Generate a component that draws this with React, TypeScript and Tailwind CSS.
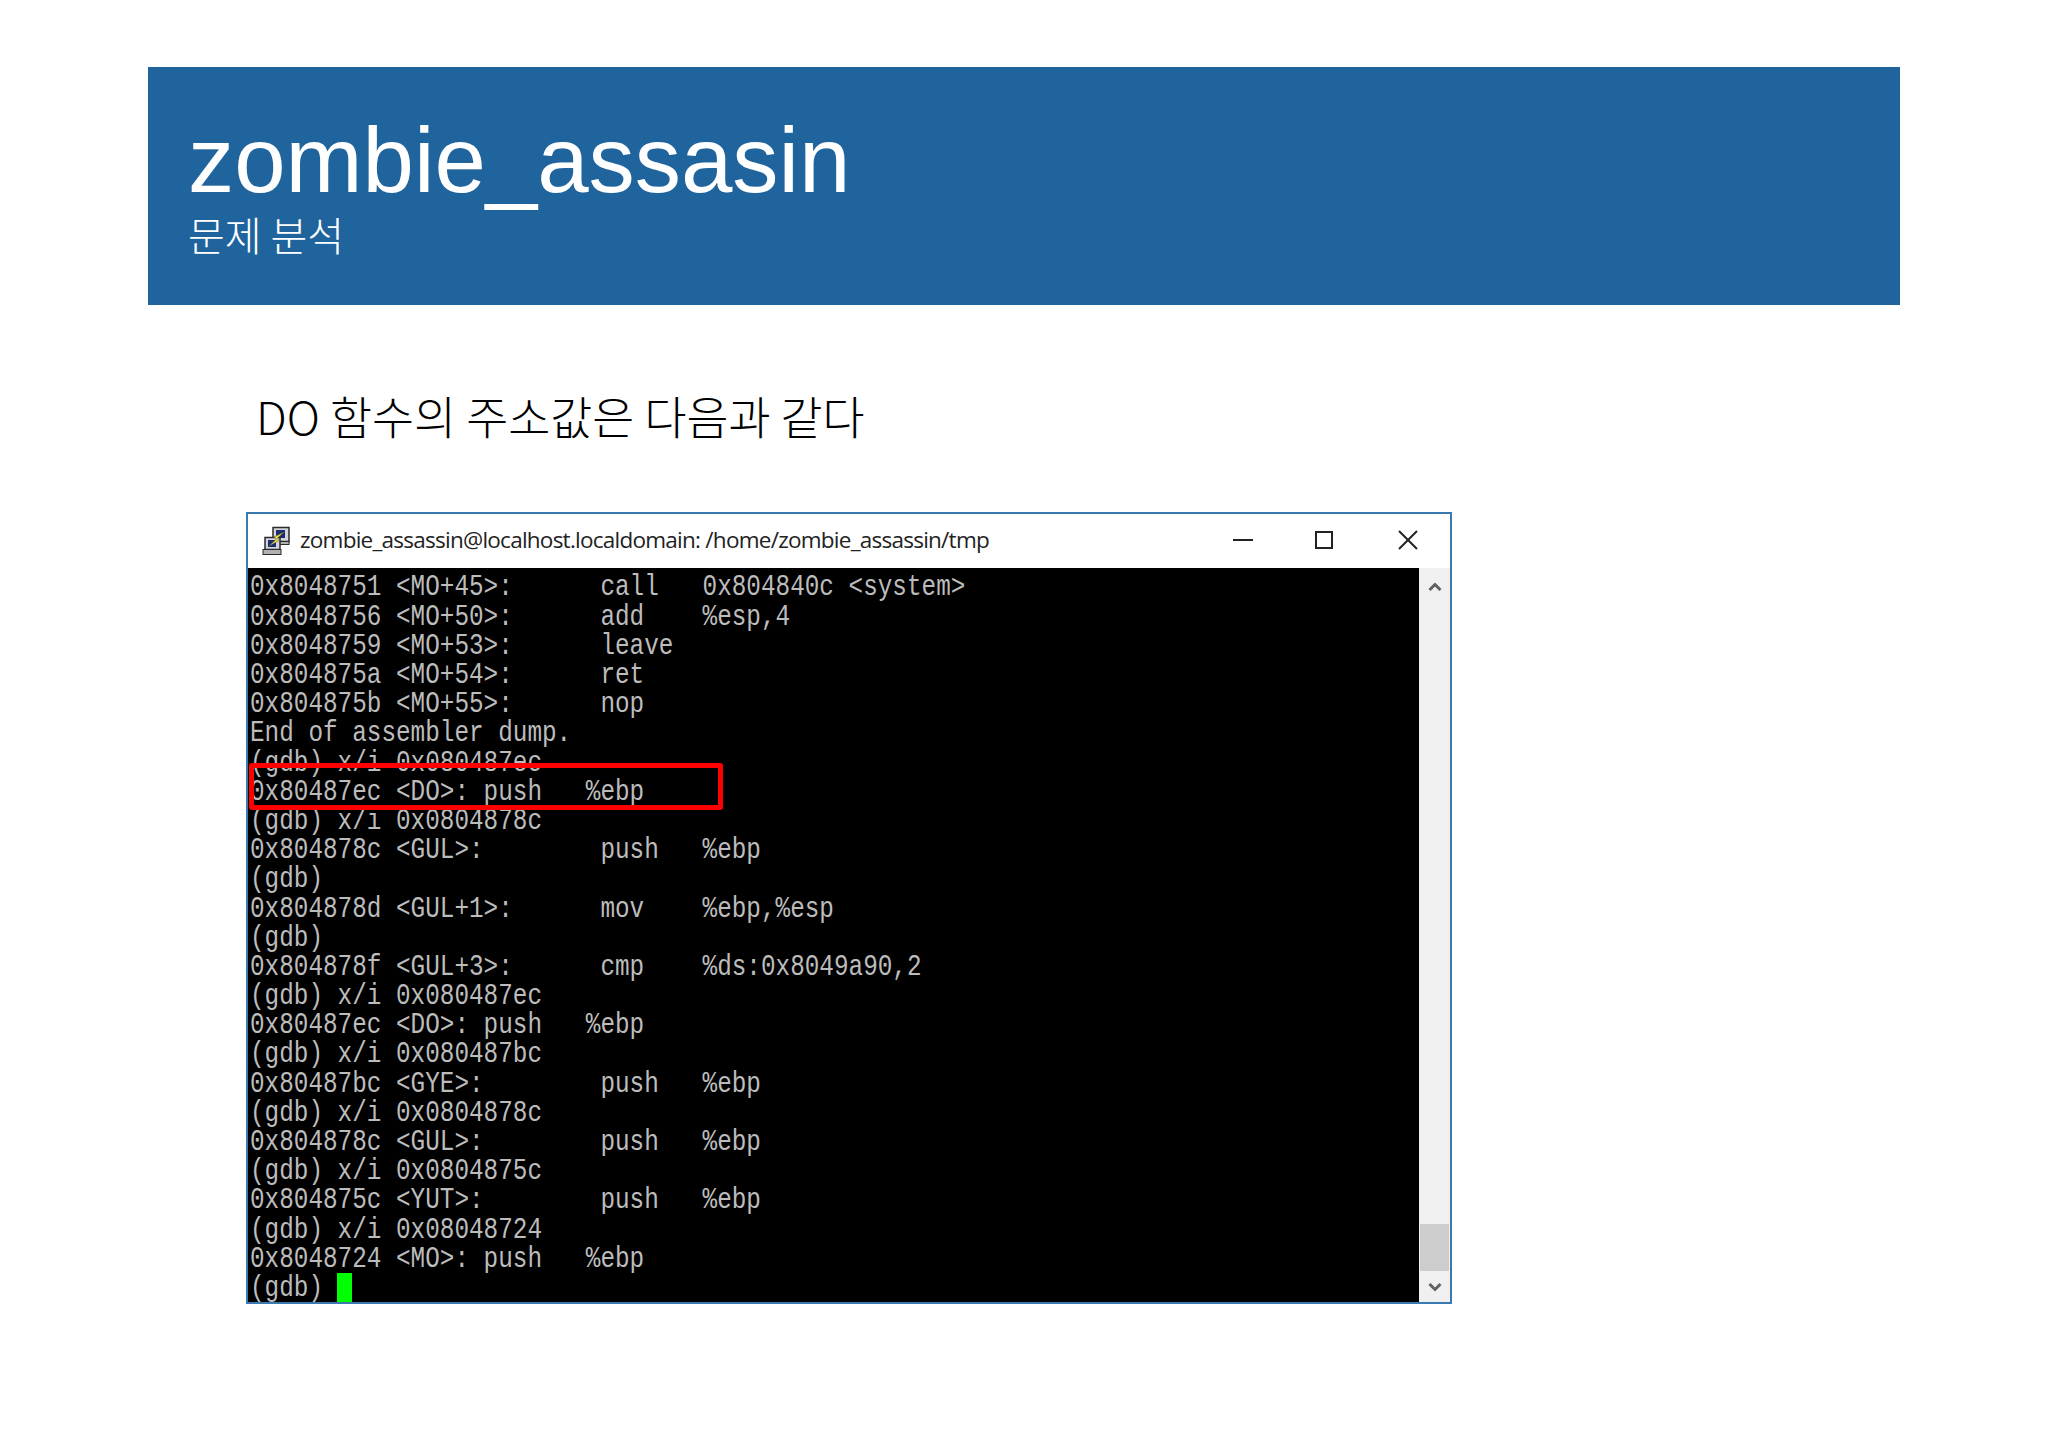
const LINES = [
  "0x8048751 <MO+45>:      call   0x804840c <system>",
  "0x8048756 <MO+50>:      add    %esp,4",
  "0x8048759 <MO+53>:      leave",
  "0x804875a <MO+54>:      ret",
  "0x804875b <MO+55>:      nop",
  "End of assembler dump.",
  "(gdb) x/i 0x080487ec",
  "0x80487ec <DO>: push   %ebp",
  "(gdb) x/i 0x0804878c",
  "0x804878c <GUL>:        push   %ebp",
  "(gdb)",
  "0x804878d <GUL+1>:      mov    %ebp,%esp",
  "(gdb)",
  "0x804878f <GUL+3>:      cmp    %ds:0x8049a90,2",
  "(gdb) x/i 0x080487ec",
  "0x80487ec <DO>: push   %ebp",
  "(gdb) x/i 0x080487bc",
  "0x80487bc <GYE>:        push   %ebp",
  "(gdb) x/i 0x0804878c",
  "0x804878c <GUL>:        push   %ebp",
  "(gdb) x/i 0x0804875c",
  "0x804875c <YUT>:        push   %ebp",
  "(gdb) x/i 0x08048724",
  "0x8048724 <MO>: push   %ebp",
];

function PuttyIcon() {
  return (
    <svg width="30" height="30" viewBox="0 0 30 30" className="shrink-0">
      <rect x="12" y="1.5" width="16" height="14" fill="#d4d4dc" stroke="#2a2a2a" strokeWidth="1.5" />
      <rect x="15" y="4" width="9" height="8" fill="#1c2a70" />
      <rect x="11" y="15.5" width="17" height="3" fill="#b0b0b0" stroke="#2a2a2a" strokeWidth="1" />
      <rect x="4" y="11.5" width="15" height="12" fill="#d4d4dc" stroke="#2a2a2a" strokeWidth="1.5" />
      <rect x="7" y="14" width="8" height="7" fill="#1c2a70" />
      <rect x="2" y="23.5" width="18" height="5" fill="#b0b0b0" stroke="#2a2a2a" strokeWidth="1" />
      <path d="M23 6 L13 11 L15.5 13 L8 20 L18 14.5 L16 12.5 Z" fill="#f2e24a" stroke="#6a6a30" strokeWidth="0.6" />
    </svg>
  );
}

export default function App() {
  return (
    <div className="w-[2048px] h-[1449px] bg-white pt-[67px] overflow-hidden font-['Liberation_Sans','Noto_Sans_CJK_KR',sans-serif]">
      <div className="ml-[148px] w-[1752px] h-[238px] bg-[#20649e] pl-[40px] pt-[47px] text-white">
        <h1 className="text-[92.4px] leading-[92px] font-normal">zombie_assasin</h1>
        <p className="text-[40px] leading-[46px] mt-[5px] font-['Noto_Sans_CJK_KR',sans-serif] font-light">문제 분석</p>
      </div>
      <p className="ml-[256px] mt-[80px] text-[45.7px] leading-[60px] text-black font-['Noto_Sans_CJK_KR',sans-serif] font-light">
        DO 함수의 주소값은 다음과 같다
      </p>
      <div className="relative ml-[246px] mt-[67px] w-[1206px] h-[792px] border-2 border-[#3a7ab0] bg-white flex flex-col">
        <div className="h-[54px] flex items-center pl-[13px] shrink-0">
          <PuttyIcon />
          <span className="ml-[9px] -mt-[2px] text-[22.5px] text-[#222] font-['Open_Sans',sans-serif] tracking-[-0.75px] whitespace-pre">
            zombie_assassin@localhost.localdomain: /home/zombie_assassin/tmp
          </span>
          <div className="ml-auto -mt-[3px] flex items-center">
            <div className="w-[20px] h-[2px] bg-[#222] mr-[62px]" />
            <div className="w-[18px] h-[18px] border-2 border-[#222] mr-[64px]" />
            <svg width="22" height="22" viewBox="0 0 22 22" className="mr-[31px]">
              <path d="M2 2 L20 20 M20 2 L2 20" stroke="#222" strokeWidth="2" fill="none" />
            </svg>
          </div>
        </div>
        <div className="flex flex-1 min-h-0">
          <div className="flex-1 bg-black pl-[2px] pt-[4.5px] text-[#bcbcbc] font-['Liberation_Mono',monospace] text-[24.33px] whitespace-pre">
            {LINES.map((line, i) => (
              <div key={i} className="h-[29.2px] flex items-center">
                <span className="leading-[23.3px] scale-y-[1.25]">{line}</span>
              </div>
            ))}
            <div className="h-[29.2px] flex items-center">
              <span className="leading-[23.3px] scale-y-[1.25]">(gdb) </span>
              <span className="-ml-[1px] w-[15px] h-[29px] bg-[#00ff00]" />
            </div>
          </div>
          <div className="w-[31px] bg-[#f0f0f0] flex flex-col items-center justify-between shrink-0">
            <svg width="14" height="12" viewBox="0 0 14 12" className="mt-[13px]">
              <path d="M1.5 9 L7 3.5 L12.5 9" stroke="#606060" strokeWidth="3" fill="none" />
            </svg>
            <div className="mt-auto w-full px-[1px]">
              <div className="h-[47px] bg-[#cdcdcd]" />
              <div className="h-[31px] flex items-center justify-center">
                <svg width="14" height="12" viewBox="0 0 14 12">
                  <path d="M1.5 3 L7 8.5 L12.5 3" stroke="#606060" strokeWidth="3" fill="none" />
                </svg>
              </div>
            </div>
          </div>
        </div>
        <div className="absolute left-[1px] top-[249px] w-[474px] h-[47px] border-[5px] border-[#ff0000] rounded-[3px]" />
      </div>
    </div>
  );
}
